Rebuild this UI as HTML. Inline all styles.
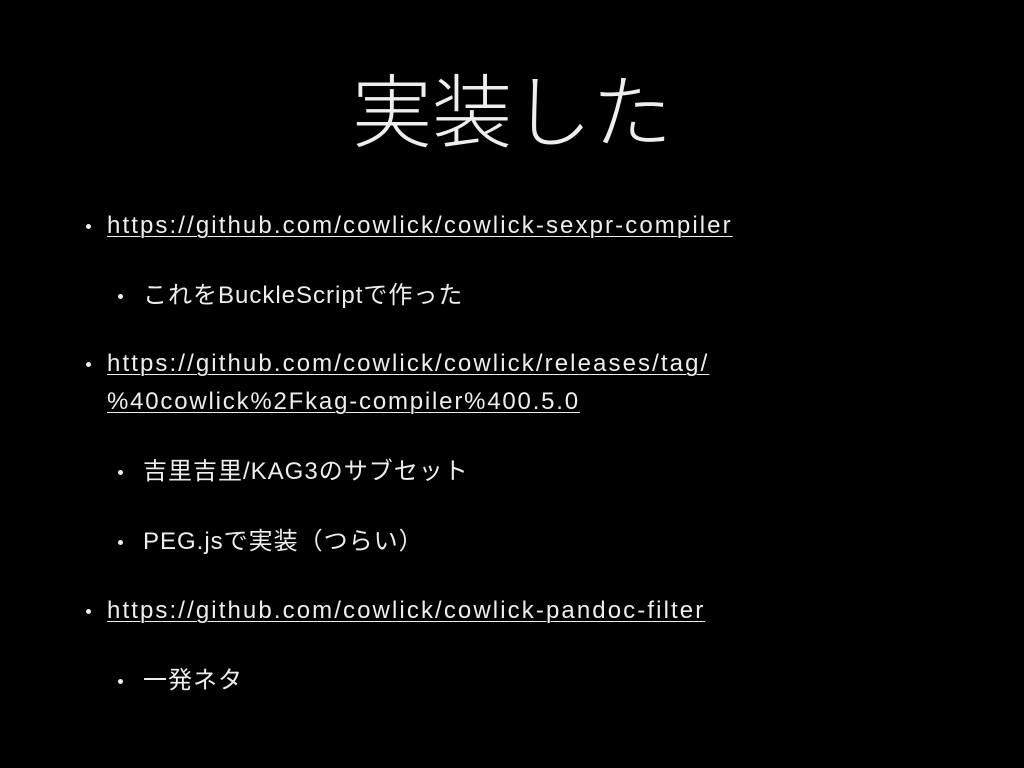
<!DOCTYPE html>
<html><head><meta charset="utf-8"><style>
html,body{margin:0;padding:0;background:#000;width:1024px;height:768px;overflow:hidden}
body{position:relative;font-family:"Liberation Sans","Noto Sans CJK JP",sans-serif;color:#eee}
.t{position:absolute;left:0;width:1024px;text-align:center;top:62px;font-size:80px;line-height:90px;font-family:"Noto Sans CJK JP",sans-serif;font-weight:300}
.l{position:absolute;font-size:24px;line-height:30px;white-space:nowrap;letter-spacing:1px}
.u{text-decoration:underline;text-decoration-thickness:1px;text-underline-offset:3px;letter-spacing:2.1px}
.b{position:absolute;width:5px;height:5px;border-radius:50%;background:#eee}
</style></head><body>
<div class="t">実装した</div>
<div class="b" style="left:86px;top:224px"></div>
<div class="l u" style="left:107px;top:211px">https://github.com/cowlick/cowlick-sexpr-compiler</div>
<div class="b" style="left:118px;top:294px"></div>
<div class="l" style="left:143px;top:281px">これをBuckleScriptで作った</div>
<div class="b" style="left:86px;top:362px"></div>
<div class="l u" style="left:107px;top:349px">https://github.com/cowlick/cowlick/releases/tag/</div>
<div class="l u" style="left:107px;top:387px;letter-spacing:1.8px">%40cowlick%2Fkag-compiler%400.5.0</div>
<div class="b" style="left:118px;top:470px"></div>
<div class="l" style="left:143px;top:457px">吉里吉里/KAG3のサブセット</div>
<div class="b" style="left:118px;top:540px"></div>
<div class="l" style="left:143px;top:527px">PEG.jsで実装（つらい）</div>
<div class="b" style="left:86px;top:609px"></div>
<div class="l u" style="left:107px;top:596px">https://github.com/cowlick/cowlick-pandoc-filter</div>
<div class="b" style="left:118px;top:679px"></div>
<div class="l" style="left:143px;top:666px">一発ネタ</div>
</body></html>
